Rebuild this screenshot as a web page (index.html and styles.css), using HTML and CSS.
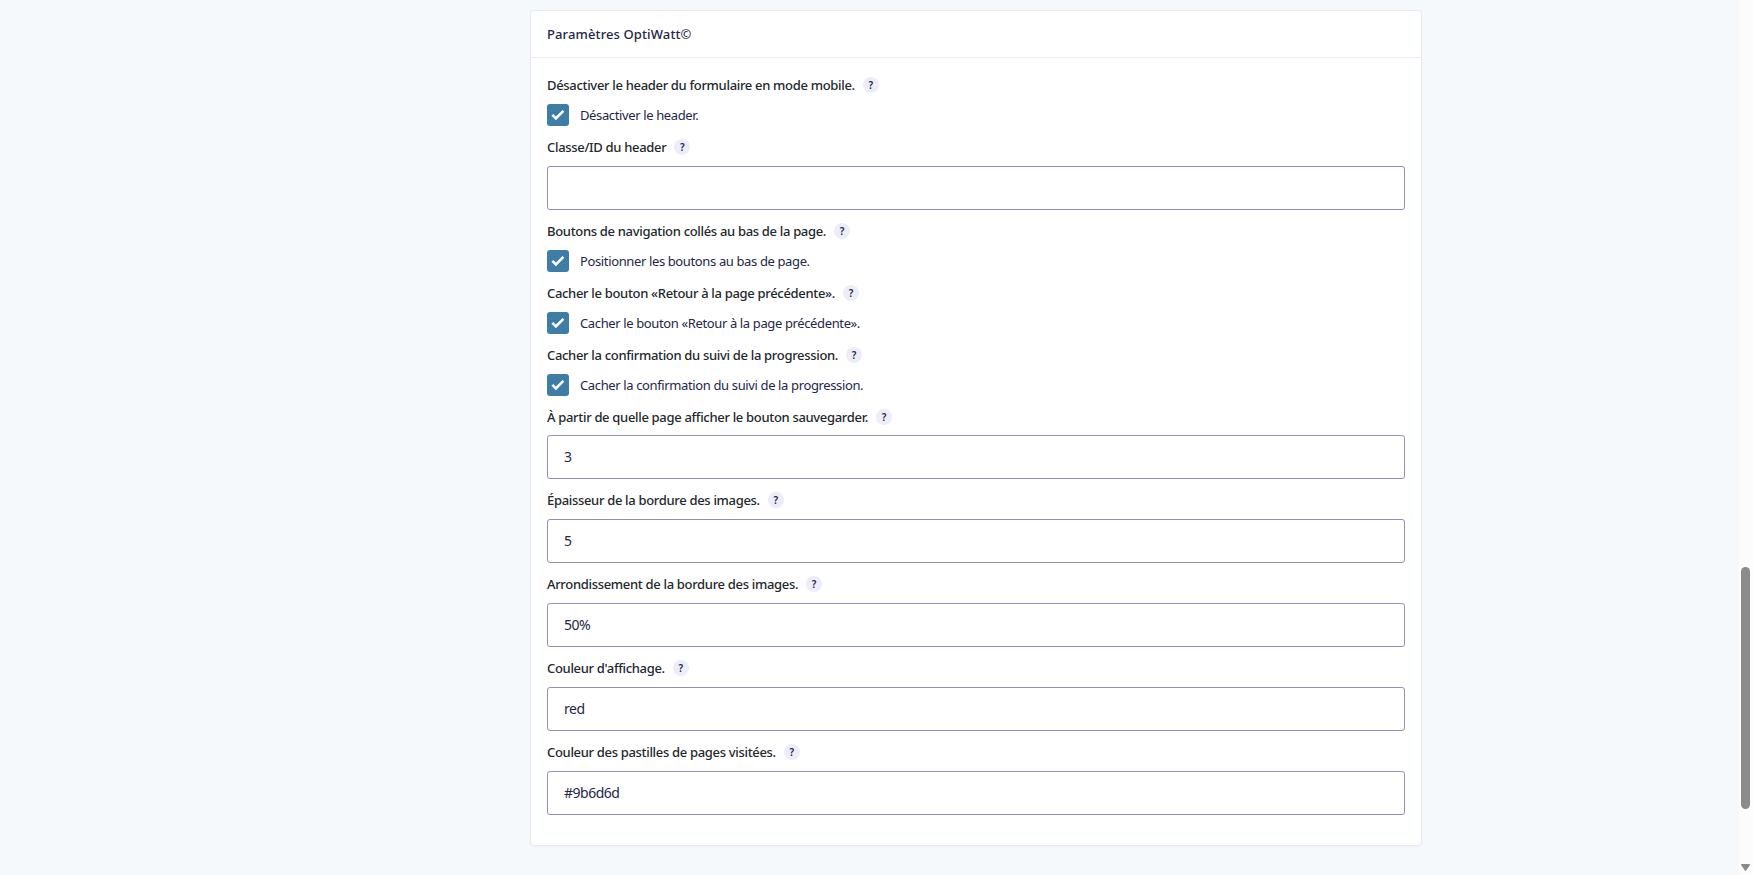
FILE: index.html
```html
<!DOCTYPE html>
<html lang="fr">
<head>
  <meta charset="UTF-8" />
  <title>Paramètres OptiWatt</title>
  <meta name="viewport" content="width=device-width, initial-scale=1" />
  <link rel="stylesheet" href="styles.css">
</head>
<body>
  <main class="content">
    <form class="panel">
      <h2 class="panel-title">Paramètres OptiWatt©</h2>
      <div class="panel-body">
        <div class="field">
          <div class="field-label"><span>Désactiver le header du formulaire en mode mobile.</span> <button type="button" class="help">?</button></div>
          <label class="choice"><span class="box"><svg viewBox="0 0 22 22"><path d="M5.3 10.9l3.6 3.6 7.5-7.6" /></svg></span><span>Désactiver le header.</span></label>
        </div>

        <div class="field">
          <div class="field-label"><span>Classe/ID du header</span> <button type="button" class="help">?</button></div>
          <input type="text" class="text" value="" />
        </div>

        <div class="field">
          <div class="field-label"><span>Boutons de navigation collés au bas de la page.</span> <button type="button" class="help">?</button></div>
          <label class="choice"><span class="box"><svg viewBox="0 0 22 22"><path d="M5.3 10.9l3.6 3.6 7.5-7.6" /></svg></span><span>Positionner les boutons au bas de page.</span></label>
        </div>

        <div class="field">
          <div class="field-label"><span>Cacher le bouton «Retour à la page précédente».</span> <button type="button" class="help">?</button></div>
          <label class="choice"><span class="box"><svg viewBox="0 0 22 22"><path d="M5.3 10.9l3.6 3.6 7.5-7.6" /></svg></span><span>Cacher le bouton «Retour à la page précédente».</span></label>
        </div>

        <div class="field">
          <div class="field-label"><span>Cacher la confirmation du suivi de la progression.</span> <button type="button" class="help">?</button></div>
          <label class="choice"><span class="box"><svg viewBox="0 0 22 22"><path d="M5.3 10.9l3.6 3.6 7.5-7.6" /></svg></span><span>Cacher la confirmation du suivi de la progression.</span></label>
        </div>

        <div class="field">
          <div class="field-label tight"><span>À partir de quelle page afficher le bouton sauvegarder.</span> <button type="button" class="help">?</button></div>
          <input type="text" class="text" value="3" />
        </div>

        <div class="field">
          <div class="field-label"><span>Épaisseur de la bordure des images.</span> <button type="button" class="help">?</button></div>
          <input type="text" class="text" value="5" />
        </div>

        <div class="field">
          <div class="field-label"><span>Arrondissement de la bordure des images.</span> <button type="button" class="help">?</button></div>
          <input type="text" class="text" value="50%" />
        </div>

        <div class="field">
          <div class="field-label"><span>Couleur d'affichage.</span> <button type="button" class="help">?</button></div>
          <input type="text" class="text" value="red" />
        </div>

        <div class="field">
          <div class="field-label"><span>Couleur des pastilles de pages visitées.</span> <button type="button" class="help">?</button></div>
          <input type="text" class="text" value="#9b6d6d" />
        </div>
      </div>
    </form>
  </main>

  <div class="scrollbar">
    <div class="thumb"></div>
    <svg class="arrow" viewBox="0 0 9 7"><path d="M0 1Q0 0 1 0h7q1 0 1 1L5.3 6.3q-.8 1-1.6 0z" /></svg>
  </div>
</body>
</html>
```
FILE: styles.css
```css
* {
  box-sizing: border-box;
}
body {
  margin: 0;
  height: 100vh;
  display: flex;
  overflow: hidden;
  background: #f5f9fc;
  color: #242748;
  font-family: "Segoe UI", "Noto Sans", sans-serif;
  font-size: 13px;
}
.content {
  flex: 1;
  display: flex;
  align-items: flex-start;
  padding: 11px 0 0 531px;
}
.panel {
  width: 890px;
  height: 834px;
  background: #fff;
  border-radius: 3px;
  box-shadow: 0 0 0 1px #e6e9ef, 0 1px 3px rgba(18, 25, 97, 0.08);
}
.panel-title {
  margin: 0;
  height: 47px;
  padding: 0 16px;
  border-bottom: 1px solid #ebebf2;
  font-size: 13px;
  font-weight: 500;
  line-height: 46px;
  letter-spacing: 0.12px;
}
.panel-body {
  padding: 15px 16px 0;
}
.field {
  margin-bottom: 9px;
}
.field-label {
  display: flex;
  align-items: center;
  height: 24px;
  margin-bottom: 7px;
  color: #23282d;
  font-weight: 500;
  letter-spacing: -0.32px;
}
.tight {
  margin-bottom: 6px;
}
.help {
  width: 16px;
  height: 16px;
  margin-left: 8px;
  padding: 0;
  border: none;
  border-radius: 50%;
  background: #ecedf8;
  color: #242748;
  font: 600 10px/16px "Segoe UI", "Noto Sans", sans-serif;
}
.choice {
  display: flex;
  align-items: center;
  gap: 11px;
  height: 22px;
  letter-spacing: -0.37px;
}
.box {
  width: 22px;
  height: 22px;
  border-radius: 3px;
  background: #3e7da6;
}
.box svg {
  display: block;
  fill: none;
  stroke: #fff;
  stroke-width: 2.5;
}
.text {
  display: block;
  width: 858px;
  height: 44px;
  padding: 0 16px 2px;
  border: 1px solid #9092b2;
  border-radius: 3px;
  background: #fff;
  color: #242748;
  font: 14px "Segoe UI", "Noto Sans", sans-serif;
  letter-spacing: -0.5px;
}
.scrollbar {
  display: flex;
  flex-direction: column;
  align-items: center;
  width: 14px;
  padding: 567px 1px 4px 0;
  background: #fcfcfc;
}
.thumb {
  width: 9px;
  height: 242px;
  border-radius: 5px;
  background: #8b8b8b;
}
.arrow {
  width: 9px;
  height: 7px;
  margin-top: auto;
  fill: #8b8b8b;
}
```
